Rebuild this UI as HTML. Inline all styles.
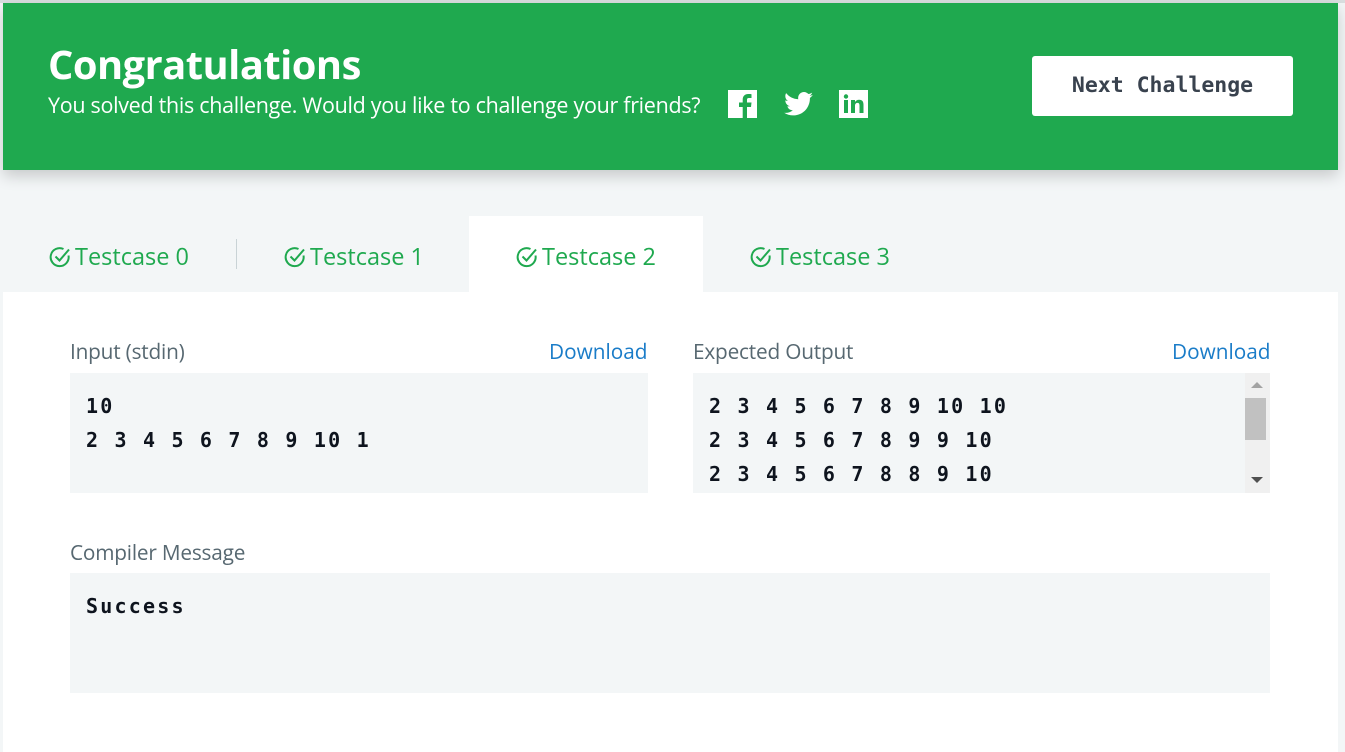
<!DOCTYPE html>
<html><head><meta charset="utf-8"><style>
*{margin:0;padding:0;box-sizing:border-box}
body{width:1345px;height:742px;overflow:hidden;background:#f3f6f7;font-family:"Open Sans","Liberation Sans",sans-serif;position:relative}
.top{position:absolute;left:0;top:0;width:1345px;height:3px;background:#d9dedf}
.hdr{position:absolute;left:3px;top:3px;width:1335px;height:167px;background:#1fa94f;box-shadow:0 6px 14px rgba(0,0,0,.18)}
.h1{position:absolute;left:45px;top:33px;color:#fff;font-size:39.8px;font-weight:bold;letter-spacing:-0.5px}
.sub{position:absolute;left:45px;top:88px;color:#fff;font-size:21.5px;letter-spacing:-0.3px}
.btn{position:absolute;left:1029px;top:53px;width:261px;height:60px;background:#fff;border-radius:3px;font-family:"DejaVu Sans Mono","Liberation Mono",monospace;font-weight:bold;font-size:21.5px;color:#39424e;text-align:center;line-height:60px}
.ic{position:absolute}
.tab{position:absolute;top:216px;height:76px;width:234px;color:#1fa94f;font-size:23.5px;line-height:80px;text-align:center}
.tab svg{vertical-align:-3px;margin-right:4px}
.sep{position:absolute;left:236px;top:239px;width:1px;height:30px;background:#c9d3d6}
.panel{position:absolute;left:3px;top:292px;width:1335px;height:460px;background:#fff}
.lbl{position:absolute;font-size:20.8px;color:#576871;letter-spacing:-0.2px}
.dl{position:absolute;font-size:20.8px;color:#1a7cc8}
.box{position:absolute;background:#f3f6f7;font-family:"DejaVu Sans Mono","Liberation Mono",monospace;font-weight:bold;font-size:20px;letter-spacing:2.2px;color:#0e141e;line-height:34px;padding:16px 16px}
</style></head><body>
<div class="top"></div>
<div class="hdr">
<div class="h1">Congratulations</div>
<div class="sub">You solved this challenge. Would you like to challenge your friends?</div>
<svg class="ic" style="left:725px;top:87px" width="29" height="28" viewBox="0 0 29 28"><rect width="29" height="28" fill="#fff"/><path d="M19 28V17h4l.5-4.5H19V10c0-1.3.4-2 2.2-2h2.3V4.2c-.5-.1-1.8-.2-3.3-.2-3.3 0-5.5 2-5.5 5.6v2.9H11V17h3.7v11z" fill="#1fa94f"/></svg>
<svg class="ic" style="left:781px;top:89px" width="29" height="24" viewBox="0 0 24 20"><path d="M24 2.4c-.9.4-1.8.6-2.8.8 1-.6 1.8-1.6 2.2-2.7-1 .6-2 1-3.1 1.2C19.3.7 18 0 16.6 0c-2.7 0-4.9 2.2-4.9 4.9 0 .4 0 .8.1 1.1C7.7 5.8 4.1 3.9 1.7.9c-.4.7-.7 1.6-.7 2.5 0 1.7.9 3.2 2.2 4.1-.8 0-1.6-.2-2.2-.6v.1c0 2.4 1.7 4.4 3.9 4.8-.4.1-.8.2-1.3.2-.3 0-.6 0-.9-.1.6 2 2.4 3.4 4.6 3.4-1.7 1.3-3.8 2.1-6.1 2.1-.4 0-.8 0-1.2-.1 2.2 1.4 4.8 2.2 7.5 2.2 9.1 0 14-7.5 14-14v-.6c1-.7 1.8-1.6 2.5-2.5z" fill="#fff"/></svg>
<svg class="ic" style="left:836px;top:87px" width="29" height="28" viewBox="0 0 29 28"><rect width="29" height="28" fill="#fff"/><rect x="5" y="10" width="4" height="13" fill="#1fa94f"/><circle cx="7" cy="6.5" r="2.2" fill="#1fa94f"/><path d="M12 10h4v2c.8-1.4 2.2-2.3 4.2-2.3 3 0 4.3 1.8 4.3 5V23h-4v-7.5c0-1.7-.6-2.6-2-2.6s-2.5 1-2.5 2.8V23h-4z" fill="#1fa94f"/></svg>
<div class="btn">Next Challenge</div>
</div>
<div class="tab" style="left:2px">
<svg width="22" height="22" viewBox="0 0 22 22"><path d="M19.5 9.5A9 9 0 1 1 14.5 3" fill="none" stroke="#1fa94f" stroke-width="2"/><path d="M6.5 10.5l4 4L20 3.5" fill="none" stroke="#1fa94f" stroke-width="2"/></svg>Testcase 0</div>
<div class="sep"></div>
<div class="tab" style="left:237px">
<svg width="22" height="22" viewBox="0 0 22 22"><path d="M19.5 9.5A9 9 0 1 1 14.5 3" fill="none" stroke="#1fa94f" stroke-width="2"/><path d="M6.5 10.5l4 4L20 3.5" fill="none" stroke="#1fa94f" stroke-width="2"/></svg>Testcase 1</div>
<div class="tab" style="left:469px;background:#fff">
<svg width="22" height="22" viewBox="0 0 22 22"><path d="M19.5 9.5A9 9 0 1 1 14.5 3" fill="none" stroke="#1fa94f" stroke-width="2"/><path d="M6.5 10.5l4 4L20 3.5" fill="none" stroke="#1fa94f" stroke-width="2"/></svg>Testcase 2</div>
<div class="tab" style="left:703px">
<svg width="22" height="22" viewBox="0 0 22 22"><path d="M19.5 9.5A9 9 0 1 1 14.5 3" fill="none" stroke="#1fa94f" stroke-width="2"/><path d="M6.5 10.5l4 4L20 3.5" fill="none" stroke="#1fa94f" stroke-width="2"/></svg>Testcase 3</div>
<div class="panel"></div>
<div class="lbl" style="left:70px;top:338px">Input (stdin)</div>
<div class="dl" style="left:549px;top:338px">Download</div>
<div class="lbl" style="left:693px;top:338px">Expected Output</div>
<div class="dl" style="left:1172px;top:338px">Download</div>
<div class="box" style="left:70px;top:373px;width:578px;height:120px">10<br>2 3 4 5 6 7 8 9 10 1</div>
<div class="box" style="left:693px;top:373px;width:577px;height:120px;overflow:hidden">2 3 4 5 6 7 8 9 10 10<br>2 3 4 5 6 7 8 9 9 10<br>2 3 4 5 6 7 8 8 9 10
<div style="position:absolute;right:0;top:0;width:25px;height:120px;background:#f0f0f0"></div>
<div style="position:absolute;right:4px;top:25px;width:21px;height:42px;background:#c1c1c1"></div>
<div style="position:absolute;right:7px;top:9px;width:0;height:0;border-left:6px solid transparent;border-right:6px solid transparent;border-bottom:6px solid #a3a3a3"></div>
<div style="position:absolute;right:7px;top:104px;width:0;height:0;border-left:6px solid transparent;border-right:6px solid transparent;border-top:6px solid #505050"></div>
</div>
<div class="lbl" style="left:70px;top:539px">Compiler Message</div>
<div class="box" style="left:70px;top:573px;width:1200px;height:120px">Success</div>
</body></html>
